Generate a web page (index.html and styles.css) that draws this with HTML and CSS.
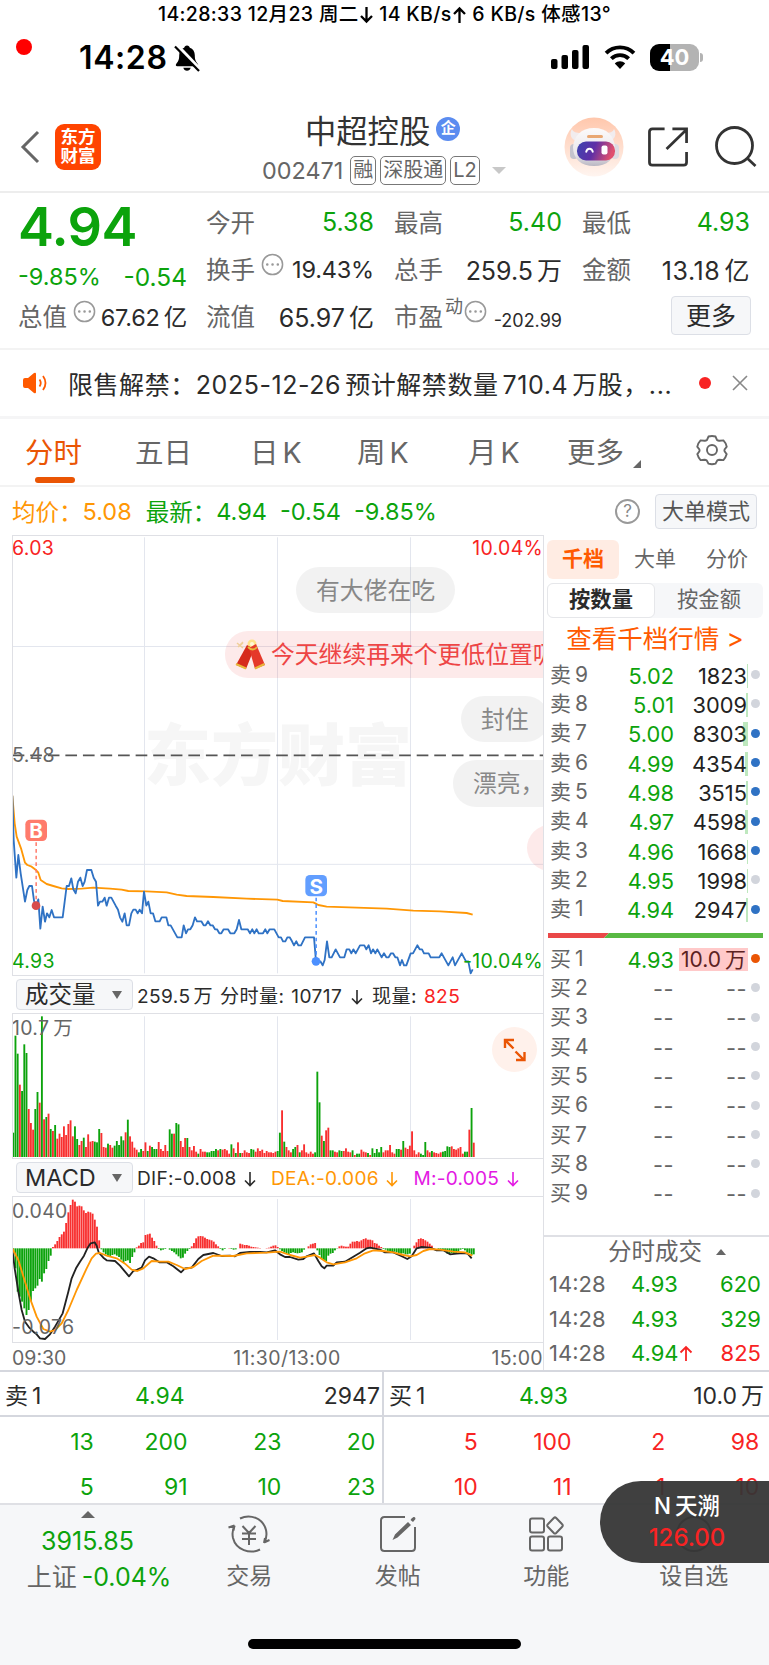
FILE: index.html
```html
<!DOCTYPE html>
<html lang="zh-CN">
<head>
<meta charset="utf-8">
<title>中超控股 002471</title>
<link rel="stylesheet" href="styles.css">
</head>
<body>
<div class="topline">14:28:33 12月23 周二<svg class="arr" viewBox="0 0 14 18"><path d="M7 1v14M1.500 10L7 15.500l5.500-5.500"/></svg> 14 KB/s<svg class="arr" viewBox="0 0 14 18"><path d="M7 17V3M1.500 8L7 2.500l5.500 5.500"/></svg> 6 KB/s 体感13°</div>

<div class="status">
  <span class="rec"></span>
  <span class="clock">14:28</span>
  <svg class="bell" viewBox="0 0 28 28">
    <path d="M14 1.500c1.600 0 2.600 1 2.800 2.300 3.200 1 5 3.800 5 7.500 0 5 1.200 6.400 3 8.700.8 1 .3 2.200-1 2.200H4.200c-1.300 0-1.800-1.200-1-2.200 1.800-2.300 3-3.700 3-8.700 0-3.700 1.800-6.500 5-7.500C11.400 2.500 12.400 1.500 14 1.500z"/>
    <path d="M10.300 23.800h7.400c-.5 1.900-1.900 3-3.700 3s-3.200-1.100-3.700-3z"/>
    <path d="M3.500 1L27 25.500" stroke="#fff" stroke-width="4"/>
    <path d="M2 2.500L26 27" stroke="#000" stroke-width="2.2"/>
  </svg>
  <svg class="signal" viewBox="0 0 40 26">
    <rect x="1" y="15" width="6.500" height="10" rx="2"/>
    <rect x="11.500" y="11" width="6.500" height="14" rx="2"/>
    <rect x="22" y="6" width="6.500" height="19" rx="2"/>
    <rect x="32.500" y="1" width="6.500" height="24" rx="2"/>
  </svg>
  <svg class="wifi" viewBox="0 0 34 26">
    <path d="M2.500 8.500C10.500.5 23.500.5 31.500 8.500" />
    <path d="M8 14.200c5-5 13-5 18 0"/>
    <path d="M17 25l-5.400-5.800c3-3 7.800-3 10.800 0z" class="solid"/>
  </svg>
  <span class="battery">40</span><span class="cap"></span>
</div>

<header class="header">
  <svg class="back" viewBox="0 0 20 34"><path d="M18 2L3 17l15 15"/></svg>
  <div class="logo">东方<br>财富</div>
  <div class="title">
    <div class="name">中超控股<span class="qi">企</span></div>
    <div class="code">002471<span class="tag first">融</span><span class="tag">深股通</span><span class="tag">L2</span><i class="caret"></i></div>
  </div>
  <svg class="robot" viewBox="0 0 60 60">
    <defs>
      <linearGradient id="halo" x1="0" y1="0" x2="0" y2="1"><stop offset="0" stop-color="#ffc7ac"/><stop offset="1" stop-color="#fff5f0"/></linearGradient>
      <linearGradient id="face" x1="0" y1="0" x2="1" y2=".2"><stop offset="0" stop-color="#3d45b0"/><stop offset=".5" stop-color="#5f2fa6"/><stop offset="1" stop-color="#e0506e"/></linearGradient>
      <linearGradient id="shell" x1="0" y1="0" x2="0" y2="1"><stop offset="0" stop-color="#fcfafa"/><stop offset=".7" stop-color="#e9e6ea"/><stop offset="1" stop-color="#b9b7c2"/></linearGradient>
    </defs>
    <circle cx="30" cy="30" r="29.500" fill="url(#halo)"/>
    <path d="M8 12c-3 5-1 10 4 12l5-8c-5 0-8-1-9-4zM50 12c3 5 1 10-4 12l-5-8c5 0 8-1 9-4z" fill="#f1ecee"/>
    <rect x="6" y="27" width="8" height="15" rx="4" fill="#c4c3cd"/>
    <rect x="47" y="27" width="8" height="15" rx="4" fill="#dddbe2"/>
    <path d="M30 11c13 0 20 8 21 19 0 12-8 19-21 19S9 42 9 30c1-11 8-19 21-19z" fill="url(#shell)"/>
    <rect x="23" y="18" width="16" height="3" rx="1.500" fill="#e9a772"/>
    <rect x="13" y="24.500" width="38" height="19" rx="9" fill="url(#face)"/>
    <path d="M22 35.500c1-5 6-5 7 0" fill="none" stroke="#fff" stroke-width="1.800"/>
    <rect x="37.500" y="28.500" width="6" height="9" rx="2" fill="#fff"/>
  </svg>
  <svg class="share" viewBox="0 0 42 40"><path d="M17 1.500H4.500q-3 0-3 3v31q0 3 3 3h32q3 0 3-3V25M25 1.500h14.500V16M39 2.500L19 22"/></svg>
  <svg class="search" viewBox="0 0 42 42"><circle cx="19.500" cy="19.500" r="18"/><path d="M32 32l8.500 8"/></svg>
</header>

<section class="quote">
  <div class="last">
    <div class="price">4.94</div>
    <div class="chg"><span>-9.85%</span><span>-0.54</span></div>
    <div class="cell"><label>总值</label><svg class="more" viewBox="0 0 24 24"><circle cx="12" cy="12" r="10.500"/><path d="M6.500 12h.1M12 12h.1M17.500 12h.1"/></svg><b class="tight">67.62<u>亿</u></b></div>
  </div>
  <div class="grid">
    <div class="cell"><label>今开</label><b class="green">5.38</b></div>
    <div class="cell"><label>最高</label><b class="green">5.40</b></div>
    <div class="cell"><label>最低</label><b class="green">4.93</b></div>
    <div class="cell"><label>换手</label><svg class="more" viewBox="0 0 24 24"><circle cx="12" cy="12" r="10.500"/><path d="M6.500 12h.1M12 12h.1M17.500 12h.1"/></svg><b class="tight">19.43%</b></div>
    <div class="cell"><label>总手</label><b>259.5<u>万</u></b></div>
    <div class="cell"><label>金额</label><b class="wide">13.18<u>亿</u></b></div>
    <div class="cell"><label>流值</label><b>65.97<u>亿</u></b></div>
    <div class="cell"><label>市盈</label><sup>动</sup><svg class="more dyn" viewBox="0 0 24 24"><circle cx="12" cy="12" r="10.500"/><path d="M6.500 12h.1M12 12h.1M17.500 12h.1"/></svg><b class="small">-202.99</b></div>
    <div class="cell"><button class="btn morebtn">更多</button></div>
  </div>
</section>

<section class="notice">
  <svg class="horn" viewBox="0 0 26 22"><path d="M1 8q0-2 2-2h3l6-5q2-1 2 1v18q0 2-2 1l-6-5H3q-2 0-2-2z" class="solid"/><path d="M17.500 7.500q2.500 3.500 0 7M21 4q5 7 0 14"/></svg>
  <span class="msg">限售解禁：2025-12-26<u>预</u>计解禁数量<u>7</u>10.4<u>万</u>股，...</span>
  <span class="dot"></span>
  <svg class="close" viewBox="0 0 16 16"><path d="M1 1l14 14M15 1L1 15"/></svg>
</section>

<nav class="tabs">
  <span class="on">分时</span>
  <span>五日</span>
  <span>日<u>K</u></span>
  <span>周<u>K</u></span>
  <span>月<u>K</u></span>
  <span>更多<i class="corner"></i></span>
  <svg class="gear" viewBox="0 0 32 32"><path d="M12.500 2.500q3.500-1 7 0l1.600 3.600q1 .8 2.500.6l3.800-.3q2.600 2.600 3.300 6.300L28.600 15.500q-.4 1 0 1.800l2.100 2.800q-.9 3.500-3.300 6l-3.900-.4q-1.400 0-2.300.8l-1.700 3.200q-3.500 1-7 0l-1.700-3.200q-.9-.8-2.300-.8l-3.900.4q-2.400-2.500-3.300-6l2.100-2.800q.4-.8 0-1.800L1.300 12.700q.7-3.700 3.300-6.300l3.800.3q1.500.2 2.500-.6z"/><circle cx="16" cy="16" r="5"/></svg>
</nav>

<section class="avg">
  <span class="orange">均价：</span><span class="orange v1">5.08</span>
  <span class="green">最新：</span><span class="green v2">4.94</span><span class="green v2">-0.54</span><span class="green">-9.85%</span>
  <span class="help">?</span>
  <button class="btn mode">大单模式</button>
</section>

<main class="main">
  <div class="charts">
    <div class="pricebox">
      <div class="mark">东方财富</div>
      <svg class="plot" viewBox="36 15 1596 1323">
        <g class="gridline"><path d="M433.500 22V1330M832.500 22V1330M1231.500 22V1330M38 349.500H1630M38 1003H1630"/></g>
        <path d="M38 676H1630" class="mid"/>
        <polyline class="lavg" points="37,797 44,880 50,920 63,955 75,998 82,1005 95,1010 108,1020 115,1028 122,1050 140,1062 160,1068 185,1075 205,1077 245,1076 280,1073 330,1076 365,1079 385,1083 440,1084 500,1087 530,1094 560,1098 640,1101 740,1106 832,1109 848,1113 940,1117 946,1120 955,1125 980,1130 1070,1133 1160,1136 1240,1142 1320,1144 1400,1149 1418,1154"/>
        <polyline class="lprice" points="37,797 41,930 49,1043 55,975 62,1030 75,1115 82,1080 88,1068 96,1068 102,1112 108,1127 115,1108 121,1196 128,1130 135,1175 141,1150 148,1162 155,1140 162,1162 188,1162 200,1068 207,1068 214,1045 220,1078 227,1090 234,1055 241,1043 248,1068 254,1055 261,1020 274,1020 281,1043 288,1055 294,1127 300,1115 307,1115 314,1103 320,1127 327,1103 334,1103 347,1127 354,1139 360,1162 367,1175 374,1150 380,1186 387,1186 394,1150 400,1139 407,1139 413,1150 419,1139 426,1150 432,1085 439,1127 445,1115 452,1150 459,1150 466,1174 479,1174 485,1162 499,1162 505,1186 512,1186 532,1222 545,1222 551,1186 558,1210 564,1198 571,1198 578,1186 585,1162 591,1174 604,1174 611,1186 617,1186 624,1174 631,1186 638,1186 645,1198 651,1198 658,1210 664,1210 671,1198 684,1198 691,1210 703,1210 710,1198 717,1170 724,1198 743,1198 750,1210 757,1198 763,1210 770,1198 776,1210 789,1210 796,1198 802,1210 809,1198 823,1198 836,1222 843,1222 849,1234 856,1234 862,1222 869,1222 876,1234 882,1246 889,1234 895,1246 903,1246 915,1222 942,1222 948,1294 961,1294 968,1306 974,1290 981,1234 988,1282 995,1282 1007,1258 1020,1282 1033,1282 1040,1258 1048,1258 1054,1270 1060,1258 1067,1270 1080,1246 1093,1246 1099,1258 1106,1246 1113,1270 1119,1258 1126,1270 1132,1258 1145,1282 1152,1270 1159,1282 1166,1282 1173,1270 1179,1270 1186,1282 1192,1282 1200,1306 1206,1290 1212,1306 1219,1306 1232,1270 1239,1270 1252,1246 1259,1258 1266,1258 1272,1270 1286,1270 1292,1282 1318,1282 1325,1270 1345,1306 1358,1282 1365,1306 1385,1270 1398,1294 1405,1294 1412,1330 1418,1318"/>
        <path d="M108.500 937V1120" class="drop buy"/>
        <circle cx="108" cy="1127" r="13" class="pt buy"/>
        <rect x="76" y="869" width="65" height="64" rx="14" fill="#ff7b6b"/>
        <path d="M948.500 1103V1290" class="drop sell"/>
        <circle cx="948" cy="1294" r="13" class="pt sell"/>
        <rect x="916" y="1035" width="65" height="64" rx="14" fill="#629eff"/>
        <text x="108.500" y="924" class="bs">B</text>
        <text x="948.500" y="1091" class="bs">S</text>
      </svg>
      <span class="lb tl red">6.03</span><span class="lb tr red">10.04%</span>
      <span class="lb ml">5.48</span>
      <span class="lb bl green">4.93</span><span class="lb br green">-10.04%</span>
      <div class="bubble b1">有大佬在吃</div>
      <div class="bubble b2">
        <svg viewBox="0 0 30 32"><path d="M2 4l6 5M8 3l-5 5M3 8l5-4" stroke="#f0cf98" stroke-width="1.500"/><circle cx="17" cy="5" r="4.500" fill="#ffe28a"/><circle cx="17" cy="5" r="2" fill="#fff8d8"/><path d="M12 6l7 4-8 20-10-4z" fill="#d62a1c"/><path d="M14 9l7-4 9 21-10 4z" fill="#e5382a"/><path d="M1 25l10 4.500M29.500 25L20 29.500M13 8q5 5 9 0" stroke="#e8b83c" stroke-width="2" fill="none"/></svg>今天继续再来个更低位置吸
      </div>
      <div class="bubble b3">封住</div>
      <div class="bubble b4">漂亮，</div>
      <div class="bubble b5"></div>
    </div>

    <div class="bar"><button class="btn sel">成交量<i></i></button><span class="info volinfo">259.5<u>万</u> 分时量: 10717 <svg class="dn" viewBox="0 0 12 16"><path d="M6 1v13M1 9.500l5 5 5-5"/></svg> 现量: <em class="red">825</em></span></div>
    <div class="volbox">
      <svg class="plot" viewBox="36 114 1596 435">
        <g class="gridline"><path d="M433.500 124V546M832.500 124V546M1231.500 124V546"/></g>
        <g id="vol"></g>
      </svg>
      <span class="lb tl">10.7<u>万</u></span>
      <span class="expand"><svg viewBox="0 0 24 24"><path d="M2 10V2h9M2.500 2.500l8 8M13 22h8.500v-8M20.500 21.500l-8-8"/></svg></span>
    </div>

    <div class="bar"><button class="btn sel">MACD<i></i></button><span class="info macdinfo"><span>DIF:-0.008 <svg class="dn" viewBox="0 0 12 16"><path d="M6 1v13M1 9.500l5 5 5-5"/></svg></span><span class="orange">DEA:-0.006 <svg class="dn" viewBox="0 0 12 16"><path d="M6 1v13M1 9.500l5 5 5-5"/></svg></span><span class="purple">M:-0.005 <svg class="dn" viewBox="0 0 12 16"><path d="M6 1v13M1 9.500l5 5 5-5"/></svg></span></span></div>
    <div class="macdbox">
      <svg class="plot" viewBox="36 663 1596 438">
        <g class="gridline"><path d="M433.500 672V1095M832.500 672V1095M1231.500 672V1095"/></g>
        <g id="macd"></g>
        <polyline class="ldif" points="37,822 44,880 55,950 65,1005 75,1040 88,1058 100,1070 110,1078 120,1090 135,1092 150,1078 165,1055 188,1015 205,950 215,910 228,880 240,860 252,842 262,820 272,805 284,802 290,812 296,832 310,848 320,856 345,858 360,872 375,890 387,904 400,888 412,884 425,878 435,856 447,845 460,850 478,862 500,862 520,874 543,892 555,880 575,878 595,852 610,840 640,834 665,843 690,842 705,844 720,834 750,831 780,831 800,832 825,826 840,838 855,846 870,846 895,854 910,852 920,844 942,835 955,858 965,874 973,880 980,872 1000,872 1010,862 1035,860 1055,848 1080,833 1100,820 1110,818 1140,824 1155,832 1180,832 1210,846 1222,852 1235,844 1250,820 1265,816 1290,818 1310,826 1330,826 1350,838 1370,836 1390,834 1403,836 1415,850"/>
        <polyline class="ldea" points="37,820 55,855 75,920 90,970 110,1025 130,1062 150,1070 165,1065 185,1045 205,1005 230,945 260,880 275,850 288,836 300,834 320,842 350,850 375,866 395,884 412,888 430,880 455,858 480,860 505,860 530,870 555,882 580,876 605,858 640,842 700,843 740,835 800,833 840,830 870,840 900,848 920,845 945,840 960,848 980,862 1000,868 1035,862 1070,850 1095,835 1120,826 1150,828 1180,832 1210,840 1230,844 1250,840 1270,828 1290,822 1320,824 1360,830 1395,832 1417,842"/>
      </svg>
      <span class="lb tl">0.040</span><span class="lb bl">-0.076</span>
    </div>
    <div class="times"><span>09:30</span><span class="noon">11:30/13:00</span><span>15:00</span></div>
  </div>

  <aside class="side">
    <div class="stabs"><span class="on">千档</span><span>大单</span><span>分价</span></div>
    <div class="seg"><span class="on">按数量</span><span>按金额</span></div>
    <div class="link">查看千档行情 <i>&gt;</i></div>
    <div class="book" id="sell"></div>
    <svg class="ratio" viewBox="0 0 215 5" preserveAspectRatio="none"><path d="M0 0h61l-5 5H0z" fill="#ea4848"/><path d="M61 0h154v5H56z" fill="#58b943"/></svg>
    <div class="book" id="buy"></div>
    <div class="deals">
      <div class="dhead">分时成交<i></i></div>
      <div class="deal"><span>14:28</span><span class="green">4.93</span><span class="green">620</span></div>
      <div class="deal"><span>14:28</span><span class="green">4.93</span><span class="green">329</span></div>
      <div class="deal"><span>14:28</span><span class="green">4.94<svg class="up" viewBox="0 0 14 16"><path d="M7 16V2M1.500 7.500L7 2l5.500 5.500"/></svg></span><span class="red">825</span></div>
    </div>
  </aside>
</main>

<section class="queue">
  <div class="half">
    <div class="qhead"><span>卖<u>1</u></span><span class="green">4.94</span><span>2947</span></div>
    <div class="qrow green"><span>13</span><span>200</span><span>23</span><span>20</span></div>
    <div class="qrow green"><span>5</span><span>91</span><span>10</span><span>23</span></div>
  </div>
  <div class="half">
    <div class="qhead"><span>买<u>1</u></span><span class="green">4.93</span><span>10.0<u>万</u></span></div>
    <div class="qrow red"><span>5</span><span>100</span><span>2</span><span>98</span></div>
    <div class="qrow red"><span>10</span><span>11</span><span>1</span><span>10</span></div>
  </div>
</section>

<footer class="foot">
  <div class="index"><i class="tri"></i><div class="green pts">3915.85</div><div class="idx">上证 <span class="green">-0.04%</span></div></div>
  <div class="item"><svg viewBox="0 0 44 40"><path d="M13 4.500C23-.5 36 4 39 16c1 4.500.3 9-1.800 12.500M37 29l1-5M37 28.500l5.500-2.500M33 35.500C23 40.500 9 36 6 24c-1-4.500-.3-9 1.800-12.500M7.500 11.500L1.500 13.500M7.500 11.500l-1 5M15.500 12l6.500 7 6.500-7M15 19.500h14M15 25h14M22 19v12"/></svg>交易</div>
  <div class="item"><svg viewBox="0 0 44 40"><path d="M29 3H8.500Q5 3 5 6.500v27Q5 37 8.500 37h27q3.500 0 3.500-3.500V13"/><path d="M32 8l3 3-13.500 12.500-5 2.500 2.500-5.500zM35.500 4.500l2-1.500q2-.5 2 2l-2.500 3-2.500-2z" class="fill"/></svg>发帖</div>
  <div class="item"><svg viewBox="0 0 44 40"><rect x="6" y="4.500" width="14" height="14" rx="2"/><rect x="6" y="22.500" width="14" height="14" rx="2"/><rect x="24" y="22.500" width="14" height="14" rx="2"/><path d="M29.800 4q1.200-1.200 2.400 0l6 6.300q1.200 1.200 0 2.400l-6 6.300q-1.200 1.200-2.400 0l-6-6.300q-1.200-1.200 0-2.400z"/></svg>功能</div>
  <div class="item lastitem"><svg viewBox="0 0 44 40"><circle cx="22" cy="20" r="17"/></svg>设自选</div>
  <div class="home"></div>
  <div class="float"><div>N<u>天</u>溯</div><div class="fp">126.00</div></div>
</footer>

<script>
// one entry per minute, g = down, r = up
var vol = "g73 g364 g310 r217 g198 g338 g312 r144 r102 r82 g144 g195 r163 g422 r113 g120 r130 g84 r78 g96 r55 r70 r60 r92 r66 r99 r110 r62 g92 g54 r36 r48 g58 r30 r68 r46 r48 g46 g44 g84 r72 r30 r28 g40 r36 r28 g34 g48 g36 g62 g50 r74 g112 r62 r46 r28 r22 g14 g24 r18 r44 g18 r34 g30 g24 g24 r45 r24 r18 r36 r18 g83 g70 r70 g102 g98 r48 r30 r57 g57 r30 r20 r33 r16 g10 r24 r16 r16 g14 g14 g18 g18 g24 r20 g24 r22 r24 r20 r10 g38 r26 g12 r44 g12 r12 r20 r14 r12 g24 g22 r16 r26 r18 r22 r12 r18 r14 r14 r12 r16 g18 g73 r140 g46 r30 r20 r14 g24 g30 r36 g14 r20 r38 r14 r10 r16 r10 g14 g256 g164 r64 g48 r80 r88 g20 g20 r16 r14 g20 g18 r18 r26 r16 r14 g20 r6 g10 g10 r22 r16 r14 g12 r6 g26 g12 g24 g14 g30 r14 r20 r20 r36 r14 r10 g24 g24 r22 g48 r28 r24 r34 r77 r20 r8 r14 g10 g6 g45 r20 r14 g18 r14 r12 r10 r14 g16 g18 g32 g30 r32 r24 r22 r26 r30 r10 g16 g16 r82 g147 r43".split(" ");
var macd = [-10,-60,-130,-145,-160,-180,-200,-185,-158,-128,-120,-112,-92,-100,-75,-62,-38,-22,4,12,22,34,42,50,76,108,130,146,140,126,128,126,114,106,110,108,104,86,65,24,-3,-12,-18,-24,-25,-20,-18,-22,-26,-34,-44,-38,-36,-44,-26,-12,3,8,16,18,40,42,44,32,22,8,-2,-6,-4,-2,0,-4,-8,-12,-18,-24,-30,-28,-16,-8,-2,6,16,30,36,37,36,32,28,26,24,20,12,6,-2,-6,-2,0,1,-2,-4,-3,0,14,12,10,10,8,5,4,3,2,1,0,0,1,2,5,8,9,4,-3,-8,-12,-14,-18,-14,-12,-14,-15,-14,-12,-4,0,6,12,14,16,-6,-20,-32,-36,-38,-22,-16,-14,-6,-1,6,8,6,5,5,14,20,20,22,20,24,28,30,26,26,24,16,14,8,4,-2,-4,-8,-10,-12,-10,-12,-14,-16,-15,-18,-18,-16,0,8,18,28,30,28,24,20,14,8,0,0,-2,-4,-6,-10,-16,-17,-14,-16,-14,-10,-4,-2,-6,-12,-14,-20,-18];
var out = "";
vol.forEach(function (v, i) {
  var h = +v.slice(1);
  out += '<rect class="' + v[0] + '" x="' + (37 + i * 6.61).toFixed(1) + '" y="' + (546 - h) + '" width="5.6" height="' + h + '"/>';
});
document.getElementById("vol").innerHTML = out;

out = "";
macd.forEach(function (v, i) {
  out += '<rect class="' + (v > 0 ? "r" : "g") + '" x="' + (37 + i * 6.61).toFixed(1) + '" y="' + (v > 0 ? 820 - v : 820) + '" width="5.6" height="' + Math.abs(v) + '"/>';
});
document.getElementById("macd").innerHTML = out;

// level, price, amount, bar width, dot colour
var sell = [
  ["9", "5.02", "1823", 1, ""], ["8", "5.01", "3009", 2, ""], ["7", "5.00", "8303", 5.5, "blue"],
  ["6", "4.99", "4354", 3, "blue"], ["5", "4.98", "3515", 2, "blue"], ["4", "4.97", "4598", 3, "blue"],
  ["3", "4.96", "1668", 1, "blue"], ["2", "4.95", "1998", 1, ""], ["1", "4.94", "2947", 2, "blue"]
];
document.getElementById("sell").innerHTML = sell.map(function (r) {
  return '<div class="row"><span>卖<u>' + r[0] + '</u></span><span class="green">' + r[1] + '</span><span class="amt">' + r[2] +
    '<i class="vb" style="width:' + r[3] + 'px"></i></span><i class="pt ' + r[4] + '"></i></div>';
}).join("");

var html = '<div class="row"><span>买<u>1</u></span><span class="green">4.93</span><span class="amt hot">10.0<u>万</u></span><i class="pt org"></i></div>';
for (var n = 2; n <= 9; n++) {
  html += '<div class="row"><span>买<u>' + n + '</u></span><span class="none">--</span><span class="none">--</span><i class="pt"></i></div>';
}
document.getElementById("buy").innerHTML = html;
</script>
</body>
</html>
```
FILE: styles.css
```css
*{
  box-sizing: border-box;
}
body{
  margin: 0;
  width: 769px;
  height: 1665px;
  overflow: hidden;
  background: #fff;
  color: #2b2b2b;
  font-family: Inter, "Noto Sans CJK SC", sans-serif;
  font-size: 24px;
  white-space: nowrap;
}
i, em, u{
  font-style: normal;
  text-decoration: none;
}
u{
  margin-left: 4px;
}
svg{
  fill: none;
  flex: none;
}
button{
  font-family: inherit;
  margin: 0;
  padding: 0;
}
.green{ color: #0ca30c; }
.red{ color: #f82323; }
.orange{ color: #ff9705; }
.purple{ color: #e31ae3; }

.topline{
  height: 28px;
  line-height: 28px;
  text-align: center;
  font-size: 19.5px;
  font-weight: 500;
  letter-spacing: .35px;
  color: #000;
}
.arr{
  width: 15px;
  height: 18px;
  vertical-align: -3px;
  stroke: #000;
  stroke-width: 2.3;
}

/* phone status bar */
.status{
  height: 60px;
  display: flex;
  align-items: center;
  color: #000;
}
.rec{
  width: 16px;
  height: 16px;
  border-radius: 50%;
  background: #f00;
  margin: -22px 0 0 16px;
}
.clock{
  width: 88px;
  margin: -2px 0 0 47px;
  font-size: 32px;
  font-weight: 600;
  letter-spacing: .6px;
}
.bell{
  width: 28px;
  height: 28px;
  margin-left: 6px;
  fill: #000;
}
.signal{
  width: 40px;
  height: 26px;
  margin: -2px 0 0 349px;
  fill: #000;
}
.wifi{
  width: 34px;
  height: 25px;
  margin: -2px 0 0 13px;
  stroke: #000;
  stroke-width: 4;
}
.solid{
  fill: #000;
  stroke: none;
}
.battery{
  width: 49px;
  height: 27px;
  margin: -2px 0 0 13px;
  border-radius: 9px;
  background: linear-gradient(90deg, #000 40%, #b3b3b3 40%);
  color: #fff;
  font-size: 22px;
  font-weight: 700;
  line-height: 27px;
  text-align: center;
}
.cap{
  width: 3px;
  height: 9px;
  margin: -2px 0 0 1px;
  border-radius: 0 4px 4px 0;
  background: #b3b3b3;
}

.header{
  height: 105px;
  display: flex;
  align-items: center;
  border-bottom: 2px solid #ededed;
  padding-top: 15px;
}
.back{
  width: 20px;
  height: 34px;
  margin: 0 0 0 20px;
  stroke: #666;
  stroke-width: 3;
}
.logo{
  width: 46px;
  height: 46px;
  margin: 0 0 0 15px;
  border-radius: 9px;
  background: #ff4400;
  color: #fff;
  font-size: 17.5px;
  font-weight: 700;
  line-height: 19px;
  padding-top: 3px;
  text-align: center;
}
.title{
  width: 461px;
  display: flex;
  flex-direction: column;
  align-items: flex-start;
  padding-top: 6px;
  margin-right: auto;
}
.name{
  height: 40px;
  margin-left: 204px;
  display: flex;
  align-items: center;
  font-size: 31.3px;
  color: #333;
}
.qi{
  width: 24px;
  height: 24px;
  margin: 0 0 0 6px;
  border-radius: 50%;
  background: #5b8cf0;
  color: #fff;
  font-size: 15px;
  font-weight: 700;
  line-height: 22px;
  text-align: center;
}
.code{
  height: 42px;
  margin-left: 161px;
  display: flex;
  align-items: center;
  font-size: 23.4px;
  color: #666;
}
.tag{
  height: 29px;
  border: 1.5px solid #777;
  border-radius: 5px;
  margin-left: 4px;
  padding: 0 2px;
  font-size: 20px;
  line-height: 26px;
}
.tag.first{
  margin-left: 7px;
}
.caret{
  margin-left: 12px;
  border: 7px solid transparent;
  border-top-color: #c8c8c8;
  border-bottom: 0;
}
.robot{
  width: 60px;
  height: 60px;
}
.share{
  width: 41px;
  height: 40px;
  margin-left: 24px;
  stroke: #333;
  stroke-width: 2.8;
}
.search{
  width: 42px;
  height: 42px;
  margin: 0 12px 0 26px;
  stroke: #333;
  stroke-width: 2.8;
}

.quote{
  height: 157px;
  display: flex;
  padding: 6px 19px 0 18px;
  border-bottom: 2px solid #f3f3f3;
}
.last{
  width: 169px;
  color: #0ca30c;
}
.price{
  height: 56px;
  line-height: 56px;
  font-size: 54px;
  font-weight: 600;
  letter-spacing: -.6px;
}
.chg{
  height: 37px;
  display: flex;
  align-items: center;
  justify-content: space-between;
  padding-top: 6px;
  font-size: 23.5px;
}
.chg span + span{
  font-size: 24.5px;
}
.cell{
  height: 47px;
  display: flex;
  align-items: center;
}
.cell label{
  font-size: 24.5px;
  color: #666;
}
.cell b{
  margin-left: auto;
  font-weight: 400;
  font-size: 25px;
  color: #2b2b2b;
}
.cell b.green{
  color: #0ca30c;
  padding-top: 1px;
}
.cell b.tight{
  font-size: 23.5px;
  letter-spacing: -.2px;
  padding-top: 1px;
}
.cell b.wide{
  letter-spacing: .6px;
}
.cell b.small{
  font-size: 18px;
  padding-top: 9px;
}
.cell sup{
  font-size: 18px;
  color: #666;
  margin: -17px 0 0 2px;
  line-height: 20px;
}
.grid{
  width: 544px;
  margin-left: 19px;
  display: grid;
  grid-template-columns: repeat(3, 168px);
  column-gap: 20px;
  grid-auto-rows: 47px;
  margin-top: -1px;
}
.more{
  width: 23px;
  height: 23px;
  margin: -8px 0 0 6px;
  stroke: #999;
  stroke-width: 1.6;
  stroke-linecap: round;
}
.more path{
  stroke-width: 2.6;
}
.more.dyn{
  margin-left: 1px;
}
.btn{
  border: 1px solid #dcdfe6;
  border-radius: 4px;
  background: #f6f7f9;
  color: #2b2b2b;
}
.morebtn{
  width: 80px;
  height: 39px;
  margin: 0 -1px 0 auto;
  font-size: 25px;
  line-height: 34px;
}

.notice{
  height: 69px;
  display: flex;
  align-items: center;
  border-bottom: 3px solid #f5f5f6;
}
.horn{
  width: 26px;
  height: 22px;
  margin-left: 22px;
  stroke: #ff5a00;
  stroke-width: 1.8;
}
.horn .solid{
  fill: #ff5a00;
}
.msg{
  width: 606px;
  margin: -1px 0 0 20px;
  font-size: 25px;
  letter-spacing: .56px;
}
.dot{
  width: 12px;
  height: 12px;
  margin-left: 25px;
  border-radius: 50%;
  background: #f82323;
}
.close{
  width: 16px;
  height: 16px;
  margin-left: 21px;
  stroke: #888;
  stroke-width: 1.6;
}

.tabs{
  height: 68px;
  display: grid;
  grid-template-columns: 110px 115px 107px 111px 99px 129px 32px;
  align-items: center;
  padding: 0 0 4px 25px;
  border-bottom: 2px solid #f3f3f3;
  font-size: 28.5px;
  color: #666;
}
.tabs span{
  position: relative;
}
.tabs .on{
  color: #ea5504;
}
.tabs .on::after{
  content: "";
  position: absolute;
  left: 10px;
  bottom: -12px;
  width: 40px;
  height: 6px;
  border-radius: 3px;
  background: #ea5504;
}
.corner{
  position: absolute;
  left: 66px;
  bottom: 3px;
  border: 4px solid #666;
  border-top-color: transparent;
  border-left-color: transparent;
}
.gear{
  width: 32px;
  height: 32px;
  stroke: #666;
  stroke-width: 1.9;
}

.avg{
  height: 48px;
  display: flex;
  align-items: center;
  padding-left: 12px;
  font-size: 23.5px;
}
.v1{ margin-right: 14px; }
.v2{ margin-right: 13px; }
.help{
  width: 25px;
  height: 25px;
  margin-left: auto;
  border: 2px solid #999;
  border-radius: 50%;
  color: #888;
  font-size: 17px;
  line-height: 21px;
  text-align: center;
}
.mode{
  width: 102px;
  height: 35px;
  margin: 0 12px 0 15px;
  font-size: 22px;
  line-height: 31px;
  color: #555;
}

.main{
  height: 837px;
  display: flex;
  border-bottom: 2px solid #d5d7de;
}
.charts{
  width: 544px;
  padding-left: 12px;
  border-right: 1px solid #dfe0e5;
}
.plot{
  display: block;
  width: 532px;
  height: 100%;
}
.pricebox, .volbox, .macdbox{
  position: relative;
  overflow: hidden;
  border: 1px solid #dfe0e5;
  border-right: 0;
}
.pricebox .plot, .volbox .plot, .macdbox .plot{
  margin: -1px;
}
.pricebox{ height: 441px; }
.pricebox .plot{ height: 441px; position: relative; }
.volbox{ height: 146px; }
.volbox .plot{ height: 145px; }
.macdbox{ height: 147px; }
.macdbox .plot{ height: 146px; }
.mark{
  position: absolute;
  left: 131px;
  top: 175px;
  font-size: 67px;
  line-height: 90px;
  font-weight: 900;
  color: #f6f6f6;
}
.gridline{
  stroke: #e3e6ee;
  stroke-width: 3;
}
.mid{
  stroke: #555;
  stroke-width: 5;
  stroke-dasharray: 35 17.7;
}
.lavg, .lprice, .ldif, .ldea{
  stroke-width: 5.5;
  stroke-linejoin: round;
}
.lavg, .ldea{ stroke: #ff9705; }
.lprice{ stroke: #2f72c4; }
.ldif{ stroke: #222; }
.drop{
  stroke-width: 4.5;
  stroke-dasharray: 11 9;
}
.drop.buy{ stroke: #ff7b6b; }
.drop.sell{ stroke: #4c90ff; }
.pt.buy{ fill: #d84b4b; }
.pt.sell{ fill: #4c90ff; }
.bs{
  fill: #fff;
  font-size: 62px;
  font-weight: 700;
  text-anchor: middle;
}
.g{ fill: #0ca30c; }
.r{ fill: #f82f2f; }
.lb{
  position: absolute;
  font-size: 19.5px;
  line-height: 24px;
  color: #666;
  letter-spacing: .3px;
}
.lb.red{ color: #f82323; }
.lb.green{ color: #0ca30c; }
.tl{ left: -1px; top: 0; }
.volbox .tl{ top: 2px; }
.macdbox .tl{ top: 2px; }
.tr{ right: 0; top: 0; }
.ml{ left: -1px; top: 207px; }
.bl{ left: -1px; bottom: 2px; }
.macdbox .bl{ bottom: 3px; }
.br{ right: 0; bottom: 2px; }
.bubble{
  position: absolute;
  height: 46px;
  border-radius: 23px;
  background: rgba(128, 128, 128, .1);
  padding: 0 20px;
  font-size: 23.8px;
  line-height: 47px;
  color: #888;
}
.b1{ left: 283px; top: 31px; }
.b2{
  left: 212px;
  top: 95px;
  height: 47px;
  padding-left: 10px;
  display: flex;
  align-items: center;
  background: rgba(240, 60, 60, .11);
  color: #ee4545;
}
.b2 svg{
  width: 30px;
  height: 32px;
  margin-right: 6px;
}
.b3{ left: 448px; top: 160px; width: 88px; }
.b4{ left: 440px; top: 224px; height: 47px; }
.b5{
  left: 514px;
  top: 289px;
  width: 60px;
  background: rgba(240, 60, 60, .11);
}
.expand{
  position: absolute;
  right: 6px;
  top: 13px;
  width: 45px;
  height: 45px;
  border-radius: 50%;
  background: #fff1eb;
  display: flex;
  align-items: center;
  justify-content: center;
}
.expand svg{
  width: 24px;
  height: 24px;
  stroke: #ea5504;
  stroke-width: 2.4;
}

.bar{
  height: 37px;
  display: flex;
  align-items: center;
  padding-left: 4px;
}
.sel{
  width: 117px;
  height: 31px;
  padding-left: 8px;
  display: flex;
  align-items: center;
  font-size: 23.5px;
  line-height: 27px;
}
.sel i{
  margin: 0 10px 0 auto;
  border: 5px solid transparent;
  border-top: 8px solid #666;
  border-bottom: 0;
}
.info{
  margin-left: 4px;
  font-size: 19.1px;
  letter-spacing: .25px;
}
.volinfo{
  letter-spacing: .4px;
  word-spacing: 1.2px;
}
.volinfo u{
  margin-left: 3px;
}
.macdinfo{
  display: flex;
  gap: 13px;
}
.dn{
  width: 12px;
  height: 16px;
  margin: 0 2px;
  vertical-align: -2px;
  stroke: currentColor;
  stroke-width: 1.6;
}
.times{
  height: 29px;
  display: flex;
  justify-content: space-between;
  align-items: center;
  font-size: 19.5px;
  color: #666;
}
.times span:last-child{
  letter-spacing: .3px;
}
.noon{
  padding-left: 16px;
  letter-spacing: .4px;
}

.side{
  width: 225px;
  padding: 5px 6px 0 3px;
  color: #666;
}
.stabs{
  height: 39px;
  display: flex;
  font-size: 21px;
  line-height: 38px;
  text-align: center;
}
.stabs span{ width: 72px; }
.stabs .on{
  border-radius: 6px;
  background: #ffece3;
  color: #ff5a00;
  font-weight: 700;
}
.seg{
  height: 35px;
  margin-top: 4px;
  display: flex;
  border-radius: 6px;
  background: #f6f7f9;
  font-size: 21.3px;
  line-height: 33px;
  text-align: center;
}
.seg span{ width: 108px; }
.seg .on{
  border: 1px solid #e6e7ea;
  border-radius: 6px;
  background: #fff;
  color: #2b2b2b;
  font-weight: 700;
  line-height: 31px;
}
.link{
  height: 43px;
  line-height: 42px;
  text-align: center;
  font-size: 25.5px;
  color: #ff5a00;
}
.link i{ font-size: 26px; }
.book{
  display: grid;
  grid-auto-rows: 29.33px;
}
.row{
  display: grid;
  grid-template-columns: 50px 74px 1fr 13px;
  align-items: center;
  padding: 0 3px 0 3px;
  font-size: 21.8px;
  line-height: 24px;
}
.row span:first-child{
  font-size: 21px;
  margin-top: -2px;
}
.row span + span{ text-align: right; }
.row .amt{
  position: relative;
  color: #222;
  margin-left: 6px;
}
.row .vb{
  position: absolute;
  right: -1px;
  top: 0;
  height: 24px;
  background: rgba(40, 180, 40, .3);
}
.row .hot{
  background: #ffc9c9;
  color: #5c2222;
  line-height: 23px;
  height: 23px;
  font-size: 21px;
  margin: -1px -1px 0 5px;
  padding-right: 2px;
}
.row .none{ letter-spacing: .5px; }
.row i.pt{
  width: 9px;
  height: 9px;
  margin: -2px 0 0 4px;
  border-radius: 50%;
  background: #d2d5dc;
}
.row i.blue{ background: #2f72c4; }
.row i.org{ background: #ea5504; }
.ratio{
  display: block;
  width: 215px;
  height: 5px;
  margin: 8px 0 7px 1px;
}
.deals{
  margin: 26px -6px 0 -3px;
  padding: 0 8px 0 5px;
  border-top: 2px solid #dfe0e5;
}
.dhead{
  height: 30px;
  line-height: 29px;
  padding-left: 59px;
  font-size: 23.5px;
}
.dhead i{
  display: inline-block;
  margin: 0 0 5px 14px;
  border: 5.5px solid transparent;
  border-bottom: 6px solid #666;
  border-top: 0;
}
.deal{
  height: 34.6px;
  display: grid;
  grid-template-columns: 82px 70px 1fr;
  align-items: center;
  font-size: 22px;
}
.deal span:last-child{ text-align: right; }
.up{
  width: 14px;
  height: 16px;
  stroke: #f82323;
  stroke-width: 1.8;
}

.queue{
  height: 131px;
  display: flex;
}
.half{ width: 382px; }
.half + .half{
  width: 387px;
  border-left: 2px solid #d5d7de;
}
.qhead{
  height: 45px;
  display: grid;
  grid-template-columns: 1fr 1fr 1fr;
  align-items: center;
  padding: 5px 2px 0 5px;
  border-bottom: 2px solid #d5d7de;
  font-size: 23px;
  line-height: 30px;
}
.qhead span:nth-child(2){ padding-left: 5px; }
.qhead span:last-child{ text-align: right; }
.half + .half .qhead{ padding-right: 5px; }
.qrow{
  height: 45px;
  padding-top: 7px;
  display: grid;
  grid-template-columns: repeat(4, 93.8px);
  font-size: 23px;
  text-align: right;
  line-height: 36px;
}

.foot{
  position: relative;
  height: 162px;
  display: grid;
  grid-template-columns: 175px 148.5px 148.5px 148.5px 1fr;
  border-top: 2px solid #dfe0e5;
  background: #f6f7f9;
  color: #666;
  text-align: center;
  font-size: 23px;
}
.tri{
  display: block;
  width: 0;
  margin: 6px auto 0;
  border: 7px solid transparent;
  border-bottom: 7px solid #666;
  border-top: 0;
}
.pts{
  height: 46px;
  line-height: 46px;
  font-size: 25px;
}
.idx{
  height: 26px;
  line-height: 26px;
  padding-left: 23px;
  font-size: 25px;
  word-spacing: -2px;
}
.item{
  padding-top: 9px;
  line-height: 34px;
}
.item svg{
  display: block;
  width: 44px;
  height: 40px;
  margin: 0 auto 5px;
  stroke: #666;
  stroke-width: 2;
}
.item .fill{
  fill: #666;
  stroke: none;
}
.lastitem{
  padding-right: 2px;
}
.home{
  position: absolute;
  left: 248px;
  top: 134px;
  width: 273px;
  height: 10px;
  border-radius: 5px;
  background: #000;
}
.float{
  position: absolute;
  right: 0;
  top: -24px;
  width: 169px;
  height: 82px;
  border-radius: 41px 0 0 41px;
  background: rgba(52, 52, 52, .94);
  color: #fff;
  font-size: 22.5px;
  font-weight: 500;
  line-height: 32px;
  padding: 9px 0 0 5px;
}
.fp{
  color: #f82323;
  font-size: 24px;
}
```
